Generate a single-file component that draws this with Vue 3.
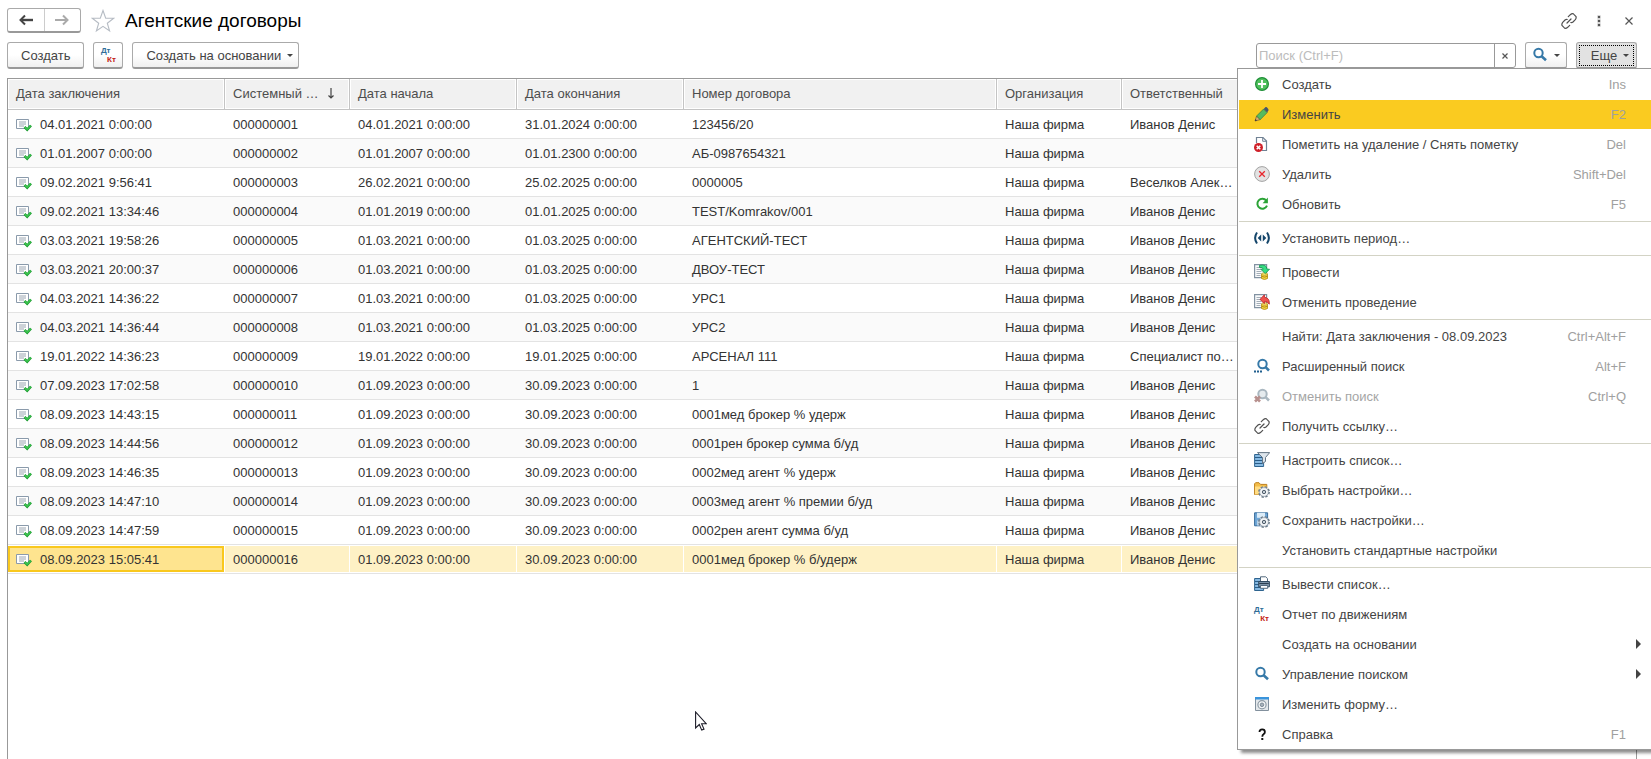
<script setup>
import { ref } from 'vue'

const search = ref('')
const org = 'Наша фирма'
const ivanov = 'Иванов Денис'

const columns = [
  { title: 'Дата заключения', cls: 'c-date' },
  { title: 'Системный …', cls: 'c-code', sorted: true },
  { title: 'Дата начала', cls: 'c-start' },
  { title: 'Дата окончания', cls: 'c-end' },
  { title: 'Номер договора', cls: 'c-number' },
  { title: 'Организация', cls: 'c-org' },
  { title: 'Ответственный', cls: 'c-owner' },
]

const rows = [
  ['04.01.2021 0:00:00', '04.01.2021', '31.01.2024', '123456/20', ivanov],
  ['01.01.2007 0:00:00', '01.01.2007', '01.01.2300', 'АБ-0987654321', ''],
  ['09.02.2021 9:56:41', '26.02.2021', '25.02.2025', '0000005', 'Веселков Алек…'],
  ['09.02.2021 13:34:46', '01.01.2019', '01.01.2025', 'TEST/Komrakov/001', ivanov],
  ['03.03.2021 19:58:26', '01.03.2021', '01.03.2025', 'АГЕНТСКИЙ-ТЕСТ', ivanov],
  ['03.03.2021 20:00:37', '01.03.2021', '01.03.2025', 'ДВОУ-ТЕСТ', ivanov],
  ['04.03.2021 14:36:22', '01.03.2021', '01.03.2025', 'УРС1', ivanov],
  ['04.03.2021 14:36:44', '01.03.2021', '01.03.2025', 'УРС2', ivanov],
  ['19.01.2022 14:36:23', '19.01.2022', '19.01.2025', 'АРСЕНАЛ 111', 'Специалист по…'],
  ['07.09.2023 17:02:58', '01.09.2023', '30.09.2023', '1', ivanov],
  ['08.09.2023 14:43:15', '01.09.2023', '30.09.2023', '0001мед брокер % удерж', ivanov],
  ['08.09.2023 14:44:56', '01.09.2023', '30.09.2023', '0001рен брокер сумма б/уд', ivanov],
  ['08.09.2023 14:46:35', '01.09.2023', '30.09.2023', '0002мед агент % удерж', ivanov],
  ['08.09.2023 14:47:10', '01.09.2023', '30.09.2023', '0003мед агент % премии б/уд', ivanov],
  ['08.09.2023 14:47:59', '01.09.2023', '30.09.2023', '0002рен агент сумма б/уд', ivanov],
  ['08.09.2023 15:05:41', '01.09.2023', '30.09.2023', '0001мед брокер % б/удерж', ivanov],
].map(([date, start, end, number, owner], i) => ({
  date,
  code: String(i + 1).padStart(9, '0'),
  start: start + ' 0:00:00',
  end: end + ' 0:00:00',
  number,
  owner,
}))

const selected = 15

const menu = [
  [
    { text: 'Создать', icon: 'add', key: 'Ins' },
    { text: 'Изменить', icon: 'pencil', key: 'F2', active: true },
    { text: 'Пометить на удаление / Снять пометку', icon: 'mark', key: 'Del' },
    { text: 'Удалить', icon: 'delete', key: 'Shift+Del' },
    { text: 'Обновить', icon: 'refresh', key: 'F5' },
  ],
  [{ text: 'Установить период…', icon: 'period' }],
  [
    { text: 'Провести', icon: 'post' },
    { text: 'Отменить проведение', icon: 'unpost' },
  ],
  [
    { text: 'Найти: Дата заключения - 08.09.2023', key: 'Ctrl+Alt+F' },
    { text: 'Расширенный поиск', icon: 'search-more', key: 'Alt+F' },
    { text: 'Отменить поиск', icon: 'search-off', key: 'Ctrl+Q', disabled: true },
    { text: 'Получить ссылку…', icon: 'link' },
  ],
  [
    { text: 'Настроить список…', icon: 'filter' },
    { text: 'Выбрать настройки…', icon: 'folder-gear' },
    { text: 'Сохранить настройки…', icon: 'save-gear' },
    { text: 'Установить стандартные настройки' },
  ],
  [
    { text: 'Вывести список…', icon: 'print' },
    { text: 'Отчет по движениям', dtkt: true },
    { text: 'Создать на основании', sub: true },
    { text: 'Управление поиском', icon: 'search', sub: true },
    { text: 'Изменить форму…', icon: 'form' },
    { text: 'Справка', icon: 'help', key: 'F1' },
  ],
]
</script>

<template>
  <div class="page">
    <svg class="defs" aria-hidden="true">
      <symbol id="i-add" viewBox="0 0 16 16">
        <circle cx="8" cy="8" r="6.4" fill="#4fc05c" stroke="#1f8f38" stroke-width="1.2" />
        <path d="M8 4v8M4 8h8" stroke="#fff" stroke-width="1.8" />
      </symbol>
      <symbol id="i-pencil" viewBox="0 0 16 16">
        <path d="M1 15l1.6-5 3.6 3.6z" fill="#e0b070" stroke="#6b5136" stroke-width=".7" />
        <path d="M1 15l.6-2 1.4 1.4z" fill="#333" />
        <path d="M2.6 10L9.6 3l3.5 3.6-6.9 7z" fill="#55bb5e" stroke="#3a7d45" stroke-width=".8" />
        <path d="M9.600 3L11.400 1.200c1-.6 3.600 1.800 3 3.300L13.100 6.600z" fill="#46566b" />
      </symbol>
      <symbol id="i-mark" viewBox="0 0 16 16">
        <path d="M2.500 7V1.500H9L12.500 5v9.500H8" fill="#fff" stroke="#718294" stroke-width="1.200" />
        <path d="M8.700 1.500V5.300h3.800" fill="none" stroke="#718294" />
        <circle cx="4.500" cy="11.500" r="4.500" fill="#cf2029" />
        <path d="M2.700 9.700l3.600 3.600M6.300 9.700l-3.600 3.600" stroke="#fff" stroke-width="1.500" />
      </symbol>
      <symbol id="i-delete" viewBox="0 0 16 16">
        <circle cx="8" cy="8" r="7.400" fill="#e3e3e3" stroke="#a3a3a3" />
        <path d="M5.200 5.200l5.600 5.600M10.800 5.200l-5.600 5.600" stroke="#e8282f" stroke-width="1.300" />
      </symbol>
      <symbol id="i-refresh" viewBox="0 0 16 16">
        <path d="M12.300 4.600A5 5 0 1 0 13 9.700" fill="none" stroke="#2ba336" stroke-width="2" />
        <path d="M13.900 1.600V7.200H8.600z" fill="#2ba336" />
      </symbol>
      <symbol id="i-period" viewBox="0 0 16 16">
        <path d="M3 2.500Q-.8 8 3 13.500M13 2.500Q16.800 8 13 13.500" fill="none" stroke="#15466b" stroke-width="2" />
        <path d="M7.200 4.500v7L3.700 8zM8.800 4.500v7L12.300 8z" fill="#15466b" />
      </symbol>
      <symbol id="i-sheet" viewBox="0 0 16 16">
        <path d="M.6.600h12v13H.6z" fill="#fafbfc" stroke="#8292a2" stroke-width="1.200" />
        <path d="M2.500 3.500h5M2.500 5.500h5M2.500 7.500h5M2.500 9.500h5M2.500 11.500h4" stroke="#a3adb7" />
      </symbol>
      <symbol id="i-coins" viewBox="0 0 16 16">
        <path d="M7.500 10v4.500q3 2 6 0V10" fill="#f3d33c" stroke="#b28a12" stroke-width=".8" />
        <ellipse cx="10.500" cy="10" rx="3" ry="1.200" fill="#fff080" stroke="#b28a12" stroke-width=".7" />
        <path d="M7.600 12.300q3 1.600 5.800 0" fill="none" stroke="#a47c10" stroke-width=".8" />
      </symbol>
      <symbol id="i-post" viewBox="0 0 16 16">
        <use href="#i-sheet" /><use href="#i-coins" />
        <path d="M5.500 1.300Q12.600-.2 13 5.200h2.500L11.300 9.600 6.700 5.200h2.500Q9 3 5.500 3.500z" fill="#36dd83" stroke="#12934c" stroke-width=".8" />
      </symbol>
      <symbol id="i-unpost" viewBox="0 0 16 16">
        <use href="#i-sheet" /><use href="#i-coins" />
        <path d="M6 5.400L10.400.8V3.200Q16 4 15.300 10.200 13.700 7.300 10.400 7.500V9.700z" fill="#f0524d" stroke="#b91e23" stroke-width=".8" />
      </symbol>
      <symbol id="i-search" viewBox="0 0 16 16">
        <circle cx="6.500" cy="6" r="4.200" fill="none" stroke="#3679a8" stroke-width="2" />
        <path d="M9.600 9.200L14 13.300" stroke="#3679a8" stroke-width="2.600" />
      </symbol>
      <symbol id="i-search-more" viewBox="0 0 16 16">
        <circle cx="8.500" cy="6" r="4.200" fill="none" stroke="#3679a8" stroke-width="2" />
        <path d="M11.300 8.900L15 12.500" stroke="#3679a8" stroke-width="2.600" />
        <path d="M0 13.500h2M3 13.500h2M6 13.500h2" stroke="#22608f" stroke-width="2" />
      </symbol>
      <symbol id="i-search-off" viewBox="0 0 16 16">
        <circle cx="8.500" cy="6" r="4.200" fill="#e5ebee" stroke="#a9b7c0" stroke-width="2" />
        <path d="M11.300 8.900L15 12.500" stroke="#a9b7c0" stroke-width="2.600" />
        <path d="M1 8.500l5 5M6 8.500l-5 5" stroke="#b7908e" stroke-width="2.600" />
      </symbol>
      <symbol id="i-link" viewBox="0 0 16 16">
        <g fill="none" stroke="#505050" stroke-width="1.200" stroke-linecap="round">
          <path d="M7.300 3.700L9.300 1.700Q10.600.5 12.200.7L15 3.500Q15.500 5.200 14.300 6.700L12 9Q11 9.800 9.800 9.500" />
          <path d="M8.700 12.300L6.700 14.300Q5.400 15.500 3.800 15.300L1 12.500Q.5 10.800 1.700 9.300L4 7Q5 6.200 6.200 6.500" />
          <path d="M6 10l4-4" />
        </g>
      </symbol>
      <symbol id="i-filter" viewBox="0 0 16 16">
        <path d="M.6 2.500h9v12H.6z" fill="#86b9e2" stroke="#2f648f" />
        <path d="M1 5.500h8M1 8.500h8M1 11.500h8" stroke="#2a5d88" />
        <path d="M3.500.6h12.200L11.500 5.500V9.500L8.500 11.500V5.500z" fill="#dde5ec" stroke="#647585" />
      </symbol>
      <symbol id="i-gear" viewBox="0 0 16 16">
        <circle cx="10" cy="10" r="5" fill="#f2f4f6" stroke="#6b7a88" stroke-width="1.800" stroke-dasharray="2.300 1.630" />
        <circle cx="10" cy="10" r="4.400" fill="#f4f6f8" stroke="#8a97a3" stroke-width=".7" />
        <circle cx="10" cy="10" r="1.700" fill="#c8d0d7" stroke="#4f5d6b" />
      </symbol>
      <symbol id="i-folder-gear" viewBox="0 0 16 16">
        <path d="M.6 12.500V1.800L1.600.7H5L6.500 2.400h6.300v10.100z" fill="#f4bd48" stroke="#bd7f1c" />
        <path d="M1 4.500h11.500v8H1z" fill="#ffdc83" />
        <use href="#i-gear" />
      </symbol>
      <symbol id="i-save-gear" viewBox="0 0 16 16">
        <path d="M.6.800h13v13H.6z" fill="#71a8d7" stroke="#376c9b" />
        <path d="M3 .8h8v5H3z" fill="#dcecf8" />
        <path d="M3 8.500h8v5H3z" fill="#bad2e6" />
        <use href="#i-gear" />
      </symbol>
      <symbol id="i-print" viewBox="0 0 16 16">
        <path d="M.6 2.500h9v12H.6z" fill="#86b9e2" stroke="#2f648f" />
        <path d="M1 5.500h8M1 8.500h8M1 11.500h8" stroke="#2a5d88" />
        <path d="M6.500 6V.8h5.200L13.500 2.600V6" fill="#fff" stroke="#52687d" />
        <path d="M4.700 5.500h10.700v5.300H4.700z" fill="#8ba2b7" stroke="#2f4960" />
        <path d="M5.200 7.500h9.600" stroke="#2b3e50" stroke-width="1.300" />
        <path d="M6.500 9.500h7.200v2.800H6.500z" fill="#fff" stroke="#52687d" />
      </symbol>
      <symbol id="i-form" viewBox="0 0 16 16">
        <path d="M1.500 1.500h13v13h-13z" fill="#e4e8eb" stroke="#82909d" />
        <path d="M1 1h14v2.500H1z" fill="#3994dc" />
        <circle cx="8" cy="8.800" r="4.100" fill="#f4f6f7" stroke="#8d9aa5" stroke-width="1.200" />
        <circle cx="8" cy="8.800" r="1.800" fill="#a7b1ba" stroke="#7d8b98" />
      </symbol>
      <symbol id="i-help" viewBox="0 0 16 16">
        <path d="M5.500 6Q5.500 3.400 8.200 3.400T10.900 5.900Q10.900 7.200 9.500 8.200 8.300 9 8.300 10.700" fill="none" stroke="#111" stroke-width="1.800" />
        <path d="M7.300 12h2v2h-2z" fill="#111" />
      </symbol>
      <symbol id="i-doc" viewBox="0 0 16 16">
        <path d="M.5 2.500h12v9H.5z" fill="#fff" stroke="#8a9aab" />
        <path d="M3 5h7M3 7h7M3 9h5" stroke="#9aa5b1" />
        <path d="M8.500 10l2.700 2.700L15 8.500" fill="none" stroke="#1c9a30" stroke-width="2.600" />
        <path d="M8.800 10.200l2.400 2.300 3.500-3.800" fill="none" stroke="#3fca52" stroke-width="1.200" />
      </symbol>
    </svg>

    <header class="title-bar">
      <div class="nav">
        <button type="button" aria-label="Назад">
          <svg width="16" height="12" viewBox="0 0 16 12"><path d="M4 6h11" stroke="#444" stroke-width="2.400" /><path d="M7 1.500L2.500 6 7 10.500" fill="none" stroke="#444" stroke-width="2" /></svg>
        </button>
        <button type="button" aria-label="Вперед">
          <svg width="16" height="12" viewBox="0 0 16 12"><path d="M1 6h11" stroke="#aaa" stroke-width="2" /><path d="M9 1.500L13.500 6 9 10.500" fill="none" stroke="#aaa" stroke-width="2" /></svg>
        </button>
      </div>
      <button type="button" class="plain star" aria-label="В избранное">
        <svg width="24" height="24" viewBox="0 0 24 24"><path d="M12 1.500l2.700 7.700 8 .1-6.400 4.900 2.300 7.800L12 17.400 5.400 22l2.300-7.800L1.300 9.300l8-.1z" fill="#fff" stroke="#b6bcc4" stroke-width="1.100" /></svg>
      </button>
      <h1>Агентские договоры</h1>
      <div class="window-tools">
        <button type="button" class="plain" aria-label="Получить ссылку"><svg width="16" height="16"><use href="#i-link" /></svg></button>
        <button type="button" class="plain" aria-label="Меню">
          <svg width="16" height="16"><path d="M6.500 2.500h3v3h-3zM6.500 6.500h3v3h-3zM6.500 10.500h3v3h-3z" fill="#555" stroke="#fff" stroke-width=".5" /></svg>
        </button>
        <button type="button" class="plain" aria-label="Закрыть">
          <svg width="16" height="16"><path d="M4.500 4.500l7 7M11.500 4.500l-7 7" stroke="#555" stroke-width="1.200" /></svg>
        </button>
      </div>
    </header>

    <div class="toolbar">
      <button type="button" class="btn">Создать</button>
      <button type="button" class="btn icon-btn"><span class="dtkt"><b>Дт</b><b>Кт</b></span></button>
      <button type="button" class="btn based">Создать на основании<i class="caret"></i></button>
      <div class="search">
        <input v-model="search" type="text" placeholder="Поиск (Ctrl+F)" aria-label="Поиск" />
        <button type="button" aria-label="Очистить">
          <svg width="8" height="8"><path d="M1.500 1.500l5 5M6.500 1.500l-5 5" stroke="#555" stroke-width="1.200" /></svg>
        </button>
      </div>
      <button type="button" class="btn find" aria-label="Найти"><svg width="16" height="16"><use href="#i-search" /></svg><i class="caret"></i></button>
      <button type="button" class="btn more" aria-haspopup="menu" aria-expanded="true">Еще<i class="caret"></i></button>
    </div>

    <main class="list">
      <table>
        <colgroup><col v-for="c in columns" :key="c.cls" :class="c.cls" /></colgroup>
        <thead>
          <tr>
            <th v-for="c in columns" :key="c.cls" scope="col">
              <div class="head">
                {{ c.title }}
                <svg v-if="c.sorted" width="8" height="12"><path d="M4 0v10M1.500 7.500L4 10l2.500-2.500" fill="none" stroke="#444" stroke-width="1.200" /></svg>
              </div>
            </th>
          </tr>
        </thead>
        <tbody>
          <tr v-for="(r, i) in rows" :key="r.code" :class="{ selected: i === selected }">
            <td><div class="doc"><svg width="16" height="16"><use href="#i-doc" /></svg>{{ r.date }}</div></td>
            <td>{{ r.code }}</td>
            <td>{{ r.start }}</td>
            <td>{{ r.end }}</td>
            <td>{{ r.number }}</td>
            <td>{{ org }}</td>
            <td>{{ r.owner }}</td>
          </tr>
        </tbody>
      </table>
    </main>

    <div class="menu" role="menu">
      <div v-for="(group, g) in menu" :key="g" class="group" role="group">
        <button
          v-for="m in group"
          :key="m.text"
          type="button"
          role="menuitem"
          :class="{ active: m.active }"
          :disabled="m.disabled"
        >
          <span class="ico">
            <svg v-if="m.icon" width="16" height="16"><use :href="'#i-' + m.icon" /></svg>
            <span v-if="m.dtkt" class="dtkt"><b>Дт</b><b>Кт</b></span>
          </span>
          <span class="label">{{ m.text }}</span>
          <span v-if="m.key" class="key">{{ m.key }}</span>
          <i v-if="m.sub" class="sub"></i>
        </button>
      </div>
    </div>

    <svg class="pointer" width="12" height="20" viewBox="0 0 12 20" aria-hidden="true">
      <path d="M.6 1v16l3.700-3.500 2.400 5.600 2.300-1-2.400-5.300h4.800z" fill="#fff" stroke="#1c1c28" stroke-width="1.100" />
    </svg>
  </div>
</template>

<style>
body {
  margin: 0;
  background: #fff;
}
</style>

<style scoped>
.page {
  position: relative;
  display: flex;
  flex-direction: column;
  box-sizing: border-box;
  min-height: 100vh;
  padding: 8px 14px 0 7px;
  overflow: hidden;
  font: 13px/16px "Liberation Sans", Arial, sans-serif;
  color: #333;
}
.defs {
  position: absolute;
  width: 0;
  height: 0;
}
svg {
  display: block;
  flex: none;
}
.dtkt {
  display: flex;
  flex-direction: column;
  width: 15px;
  font-size: 8px;
  line-height: 9px;
  text-align: left;
}
.dtkt b {
  color: #2f6d98;
}
.dtkt b + b {
  align-self: flex-end;
  color: #c4200f;
}
button,
input {
  box-sizing: border-box;
  margin: 0;
  padding: 0;
  font: inherit;
  color: inherit;
}
.title-bar {
  display: flex;
  align-items: center;
  height: 25px;
}
.nav {
  display: flex;
  box-sizing: border-box;
  width: 74px;
  height: 25px;
  border: 1px solid #aaa;
  border-bottom: 2px solid #999;
  border-radius: 3px;
}
.nav button {
  display: flex;
  flex: 1;
  align-items: center;
  justify-content: center;
  border: 0;
  background: none;
}
.nav button + button {
  border-left: 1px solid #ccc;
}
.plain {
  border: 0;
  background: none;
}
.star {
  margin-left: 10px;
}
h1 {
  margin: 0 0 0 10px;
  font-size: 19px;
  line-height: 24px;
  font-weight: 400;
  color: #000;
}
.window-tools {
  display: flex;
  align-items: center;
  gap: 14px;
  margin-left: auto;
}
.toolbar {
  display: flex;
  align-items: stretch;
  height: 27px;
  margin-top: 9px;
}
.btn {
  display: flex;
  align-items: center;
  justify-content: center;
  padding: 1px 13px 0;
  border: 1px solid #aaa;
  border-bottom: 2px solid #999;
  border-radius: 3px;
  background: linear-gradient(#fff 50%, #f0f0f0);
  color: #444;
  white-space: nowrap;
}
.icon-btn {
  width: 30px;
  margin: 0 9px;
  padding: 0;
}
.caret {
  width: 0;
  height: 0;
  margin-left: 6px;
  border: 3px solid transparent;
  border-top-color: #444;
  border-bottom: 0;
}
.based {
  padding: 1px 5px 0 13px;
}
.search {
  display: flex;
  width: 260px;
  height: 25px;
  margin: 1px 9px 0 auto;
  box-sizing: border-box;
  border: 1px solid #999;
  border-radius: 3px;
}
.search input {
  flex: 1;
  min-width: 0;
  padding: 0 2px;
  border: 0;
  outline: 0;
  background: none;
}
.search input::placeholder {
  color: #bcbcbc;
  opacity: 1;
}
.search button {
  display: flex;
  align-items: center;
  justify-content: center;
  width: 21px;
  border: 0;
  border-left: 1px solid #999;
  background: none;
}
.find {
  width: 42px;
  padding: 0;
}
.more {
  width: 61px;
  margin-left: 9px;
  padding: 1px 0 0 7px;
  background: #e2e2e2;
  outline: 1px dotted #000;
  outline-offset: -4px;
}
.list {
  flex: 1;
  margin-top: 9px;
  border: 1px solid #999;
  border-bottom: 0;
}
table {
  width: 100%;
  table-layout: fixed;
  border-collapse: separate;
  border-spacing: 0;
}
.c-date {
  width: 217px;
}
.c-code,
.c-org {
  width: 125px;
}
.c-start,
.c-end {
  width: 167px;
}
.c-number {
  width: 313px;
}
th,
td {
  box-sizing: border-box;
  overflow: hidden;
  padding: 0 8px;
  text-align: left;
  white-space: nowrap;
}
th {
  height: 31px;
  border-right: 1px solid #c4c4c4;
  border-bottom: 1px solid #c4c4c4;
  background: #f1f1f1;
  box-shadow: inset 0 0 0 1px #fff;
  font-weight: 400;
  color: #4d4d4d;
}
.head {
  display: flex;
  align-items: center;
  justify-content: space-between;
  padding-right: 6px;
}
td {
  height: 29px;
  padding-top: 2px;
  border-bottom: 1px solid #e3e3e3;
}
tbody tr:nth-child(even) {
  background: #fafafa;
}
tbody .selected td {
  background: #fef1c5;
  box-shadow: inset 0 1px #fff, inset 0 -1px #fff, inset -1px 0 #fff;
}
tbody .selected td:first-child {
  background: #fee48f;
  box-shadow: inset 0 1px #fff, inset 0 -1px #fff, inset -1px 0 #fff, inset 2px 0 #f9c81e,
    inset -3px 0 #f9c81e, inset 0 3px #f9c81e, inset 0 -3px #f9c81e;
}
.doc {
  display: flex;
  align-items: center;
  gap: 8px;
}
.menu {
  position: absolute;
  top: 68px;
  right: 0;
  box-sizing: border-box;
  width: 414px;
  padding-left: 1px;
  border: 1px solid #999;
  border-right: 0;
  background: #fff;
  box-shadow: 4px 3px 3px rgba(0, 0, 0, 0.45);
}
.group + .group::before {
  content: "";
  display: block;
  height: 1px;
  margin: 2px 0 1px;
  background: #d3d3c5;
}
.menu button {
  display: flex;
  align-items: center;
  width: 100%;
  height: 30px;
  padding: 0 10px 0 15px;
  border: 0;
  background: none;
  color: #444;
  text-align: left;
}
.menu .active {
  background: linear-gradient(#fff 1px, #facb20 1px);
}
.menu button:disabled {
  color: #a5a5a5;
}
.ico {
  width: 28px;
}
.label {
  flex: 1;
  padding-top: 2px;
}
.key {
  margin-right: 15px;
  padding-top: 2px;
  color: #a0a0a0;
}
.sub {
  border: 5px solid transparent;
  border-left-color: #444;
  border-right: 0;
}
.pointer {
  position: absolute;
  left: 695px;
  top: 711px;
}
</style>
